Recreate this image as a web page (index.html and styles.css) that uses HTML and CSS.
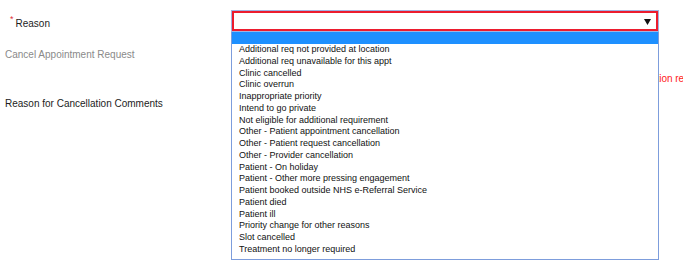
FILE: index.html
```html
<!DOCTYPE html>
<html lang="en">
<head>
    <meta charset="UTF-8">
    <meta name="viewport" content="width=device-width, initial-scale=1.0">
    <title>Cancel Appointment Request</title>
    <link rel="stylesheet" href="styles.css">
</head>
<body>
    <div class="form">
        <div class="row row-reason">
            <label class="field-label required"><span class="req">*</span>Reason</label>
            <div class="select-wrap">
                <div class="select">
                    <svg class="select-arrow" width="7" height="6" viewBox="0 0 7 6"><polygon points="0,0 7,0 3.5,6" fill="#111"/></svg>
                </div>
                <ul class="dropdown">
                    <li class="option selected"></li>
                    <li class="option">Additional req not provided at location</li>
                    <li class="option">Additional req unavailable for this appt</li>
                    <li class="option">Clinic cancelled</li>
                    <li class="option">Clinic overrun</li>
                    <li class="option">Inappropriate priority</li>
                    <li class="option">Intend to go private</li>
                    <li class="option">Not eligible for additional requirement</li>
                    <li class="option">Other - Patient appointment cancellation</li>
                    <li class="option">Other - Patient request cancellation</li>
                    <li class="option">Other - Provider cancellation</li>
                    <li class="option">Patient - On holiday</li>
                    <li class="option">Patient - Other more pressing engagement</li>
                    <li class="option">Patient booked outside NHS e-Referral Service</li>
                    <li class="option">Patient died</li>
                    <li class="option">Patient ill</li>
                    <li class="option">Priority change for other reasons</li>
                    <li class="option">Slot cancelled</li>
                    <li class="option">Treatment no longer required</li>
                </ul>
            </div>
        </div>

        <div class="row row-cancel">
            <label class="field-label muted">Cancel Appointment Request</label>
        </div>

        <div class="row row-error">
            <span class="error-text">Reason for cancellation required</span>
        </div>

        <div class="row row-comments">
            <label class="field-label">Reason for Cancellation Comments</label>
        </div>
    </div>
</body>
</html>
```

FILE: styles.css
```css
html, body {
    min-height: 275px;
}

body {
    margin: 0;
    font-family: "Liberation Sans", Arial, sans-serif;
    font-size: 10px;
    color: #1c1c1c;
    background: #fff;
    overflow: hidden;
}

.form {
    padding: 10px 0 0 5px;
    min-height: 265px;
}

.row {
    display: flex;
}

.field-label {
    width: 226px;
    line-height: 12px;
}

.row-reason {
    height: 22px;
}

.row-reason .field-label {
    padding-top: 8px;
    box-sizing: border-box;
    padding-left: 5px;
}

.req {
    color: #e0303a;
    font-size: 9px;
    vertical-align: top;
    position: relative;
    top: -5px;
    margin-right: 2px;
}

.select-wrap {
    position: relative;
    width: 428px;
}

.select {
    height: 22px;
    box-sizing: border-box;
    border: 1px solid #9fb4e4;
    box-shadow: inset 0 0 0 2px #ec1c2e;
    background: #fff;
    position: relative;
}

.select-arrow {
    position: absolute;
    right: 7px;
    top: 8px;
}

.dropdown {
    position: absolute;
    top: 22px;
    left: 0;
    right: 0;
    margin: 0;
    padding: 0 0 3px 0;
    list-style: none;
    background: #fff;
    border: 1px solid #7d9ddc;
    border-top: none;
    font-size: 9px;
    line-height: 11.76px;
    color: #111;
    z-index: 10;
}

.option {
    padding-left: 7px;
    height: 11.76px;
    white-space: nowrap;
}

.option.selected {
    height: 12px;
    background: #1e90ff;
}

.row-cancel {
    margin-top: 17px;
}

.muted {
    color: #8a8a8a;
}

.row-error {
    margin-top: 12px;
    padding-left: 563px;
    line-height: 12px;
}

.error-text {
    color: #ff1a1a;
    white-space: nowrap;
}

.row-comments {
    margin-top: 13px;
}
```
